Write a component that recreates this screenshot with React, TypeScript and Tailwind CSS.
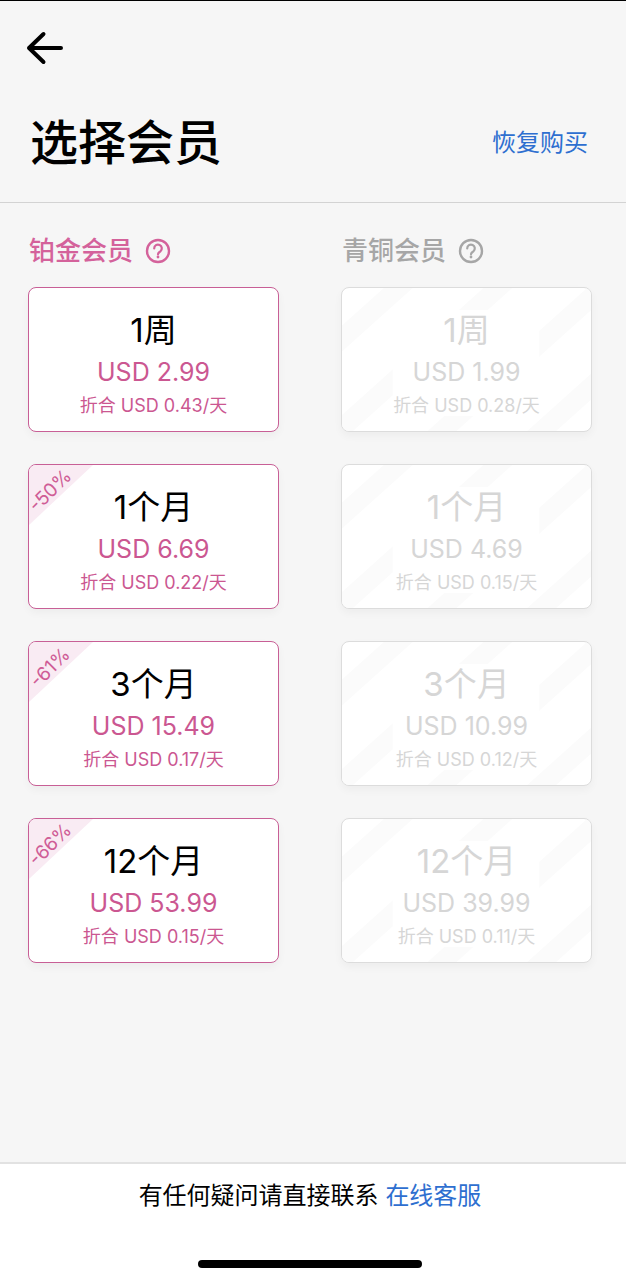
import React from 'react';
import cc from 'clsx';

interface Plan {
  period: string;
  price: string;
  perDay: string;
  discount?: string;
}

interface Tier {
  id: string;
  name: string;
  disabled?: boolean;
  plans: Plan[];
}

const tiers: Tier[] = [
  {
    id: 'platinum',
    name: '铂金会员',
    plans: [
      { period: '1周', price: 'USD 2.99', perDay: '折合 USD 0.43/天' },
      {
        period: '1个月',
        price: 'USD 6.69',
        perDay: '折合 USD 0.22/天',
        discount: '-50%',
      },
      {
        period: '3个月',
        price: 'USD 15.49',
        perDay: '折合 USD 0.17/天',
        discount: '-61%',
      },
      {
        period: '12个月',
        price: 'USD 53.99',
        perDay: '折合 USD 0.15/天',
        discount: '-66%',
      },
    ],
  },
  {
    id: 'bronze',
    name: '青铜会员',
    disabled: true,
    plans: [
      { period: '1周', price: 'USD 1.99', perDay: '折合 USD 0.28/天' },
      { period: '1个月', price: 'USD 4.69', perDay: '折合 USD 0.15/天' },
      { period: '3个月', price: 'USD 10.99', perDay: '折合 USD 0.12/天' },
      { period: '12个月', price: 'USD 39.99', perDay: '折合 USD 0.11/天' },
    ],
  },
];

function BackIcon() {
  return (
    <svg width="38" height="34" viewBox="0 0 38 34" fill="none" aria-hidden>
      <path
        d="M35 17H3M17.5 3L3 17l14.5 14"
        stroke="#000"
        strokeWidth="4"
        strokeLinecap="round"
        strokeLinejoin="round"
      />
    </svg>
  );
}

function HelpIcon() {
  return (
    <svg width="26" height="26" viewBox="0 0 26 26" fill="none" aria-hidden>
      <circle cx="13" cy="13" r="11" stroke="currentColor" strokeWidth="2.4" />
      <path
        d="M9.2 10.4a3.8 3.8 0 1 1 6.2 2.9c-1.3 1-2.4 1.5-2.4 3"
        stroke="currentColor"
        strokeWidth="2.2"
        strokeLinecap="round"
      />
      <circle cx="13" cy="19" r="1.4" fill="currentColor" />
    </svg>
  );
}

// Diagonal hatching behind plans that can't be bought
function Stripes() {
  return (
    <svg
      className="absolute inset-0 w-full h-full rounded-[7px]"
      viewBox="0 0 250 144"
      preserveAspectRatio="none"
      aria-hidden
    >
      {[42, 142, 246, 346].map((x) => (
        <path key={x} d={`M${x} 0h29l-160 144h-29z`} fill="#fbfbfb" />
      ))}
      <rect x="51" y="22" width="147" height="107" fill="#fff" />
    </svg>
  );
}

function DiscountBadge({ value }: { value: string }) {
  return (
    <span className="absolute top-0 left-0 w-16 h-16">
      <svg
        className="absolute inset-0 w-full h-full rounded-tl-[7px]"
        viewBox="0 0 64 64"
        aria-hidden
      >
        <path d="M0 0h64L0 60z" fill="#f9ebf3" />
      </svg>
      <span className="relative flex items-center justify-center w-[42px] h-[52px]">
        <span className="-rotate-45 text-[19px] leading-4 text-[#cf5d96]">
          {value}
        </span>
      </span>
    </span>
  );
}

function PlanCard({ plan, disabled }: { plan: Plan; disabled?: boolean }) {
  return (
    <button
      type="button"
      disabled={disabled}
      className={cc(
        'relative w-full h-[145px] rounded-lg border bg-white pt-2 shadow-[0_4px_8px_rgba(0,0,0,0.04)]',
        disabled ? 'border-[#dcdcdc]' : 'border-[#c85f96]'
      )}
    >
      {disabled && <Stripes />}
      {plan.discount && <DiscountBadge value={plan.discount} />}
      <span className="relative flex flex-col items-center whitespace-nowrap">
        <span
          className={cc(
            'text-[33px] leading-[44px]',
            disabled ? 'text-[#d6d6d6]' : 'text-black'
          )}
        >
          {plan.period}
        </span>
        <span
          className={cc(
            'text-[25px] leading-[40px]',
            disabled ? 'text-[#d6d6d6]' : 'text-[#cb5791]'
          )}
        >
          {plan.price}
        </span>
        <span
          className={cc(
            'text-[18px] leading-[28px]',
            disabled ? 'text-[#d6d6d6]' : 'text-[#cb5791]'
          )}
        >
          {plan.perDay}
        </span>
      </span>
    </button>
  );
}

function TierColumn({ tier }: { tier: Tier }) {
  return (
    <section className="flex-1 min-w-0">
      <div
        className={cc(
          'flex items-center gap-3 h-8 pl-px',
          tier.disabled ? 'text-[#a6a6a6]' : 'text-[#d4629b]'
        )}
      >
        <h2 className="text-[26px] leading-8 font-medium">{tier.name}</h2>
        <button type="button" aria-label={`${tier.name}说明`}>
          <HelpIcon />
        </button>
      </div>
      <div className="mt-5 flex flex-col gap-8">
        {tier.plans.map((plan) => (
          <PlanCard key={plan.period} plan={plan} disabled={tier.disabled} />
        ))}
      </div>
    </section>
  );
}

export default function App() {
  return (
    <div className="min-h-screen flex flex-col bg-[#f6f6f6] border-t border-black text-black font-[Inter,'Noto_Sans_CJK_SC',sans-serif]">
      <header className="border-b border-[#d3d3d3] pt-[30px] pl-[26px] pr-[38px] pb-[27px]">
        <button type="button" aria-label="返回" className="block">
          <BackIcon />
        </button>
        <div className="mt-[46px] flex items-center justify-between pl-1">
          <h1 className="text-[48px] leading-[64px] font-medium">选择会员</h1>
          <a href="#restore" className="text-2xl text-[#2e6fd0]">
            恢复购买
          </a>
        </div>
      </header>

      <main className="flex-1 flex gap-[62px] pt-8 pl-7 pr-[34px] pb-8">
        {tiers.map((tier) => (
          <TierColumn key={tier.id} tier={tier} />
        ))}
      </main>

      <footer className="flex flex-col items-center border-t-2 border-[#e2e2e2] bg-white pt-4 pr-1.5 pb-3">
        <p className="text-2xl">
          有任何疑问请直接联系{' '}
          <a href="#support" className="text-[#2e6fd0]">
            在线客服
          </a>
        </p>
        <div className="mt-12 w-[224px] h-2 rounded-full bg-black" />
      </footer>
    </div>
  );
}
